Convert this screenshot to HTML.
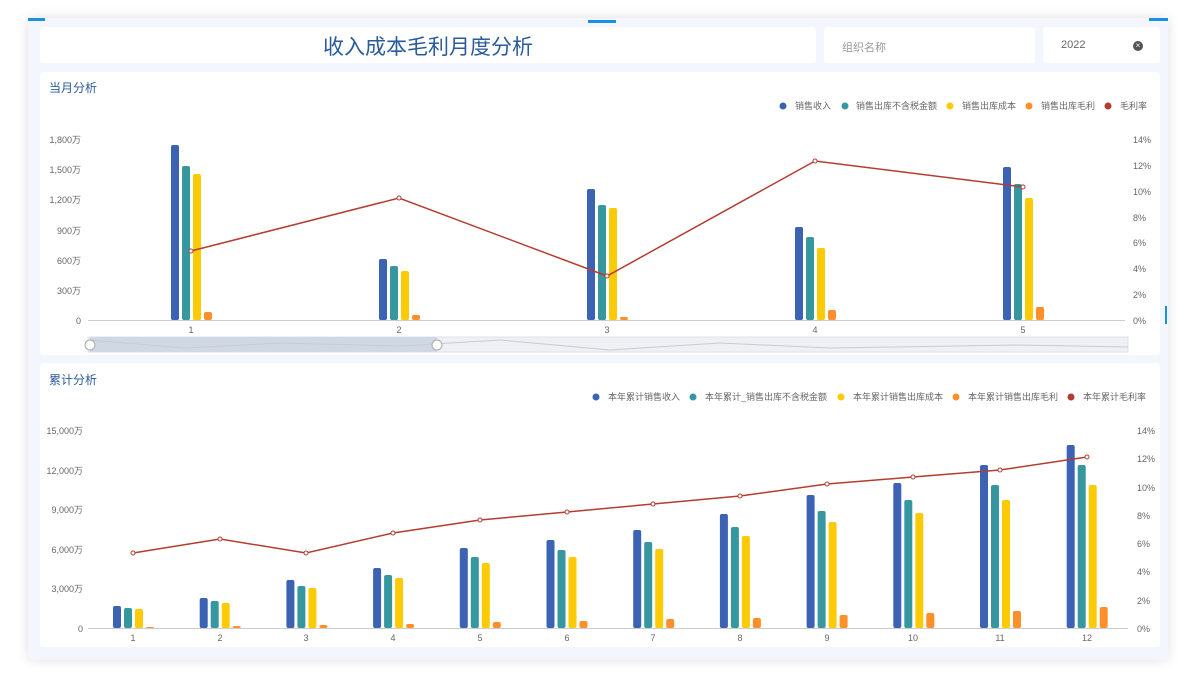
<!DOCTYPE html>
<html><head><meta charset="utf-8"><style>
*{margin:0;padding:0;box-sizing:border-box}
body{width:1200px;height:675px;background:#fff;font-family:"Liberation Sans","Noto Sans CJK SC",sans-serif;position:relative;overflow:hidden}
.outer{position:absolute;left:28px;top:18px;width:1140px;height:642px;background:#f3f7fd;box-shadow:0 0 12px rgba(0,0,0,.12)}
.box{position:absolute;background:#fff;border-radius:3px}
svg{position:absolute;left:0;top:0}
</style></head><body>
<div class="outer"></div>
<div style="position:absolute;left:28px;top:18px;width:17px;height:3px;background:#1a8fe3"></div>
<div style="position:absolute;left:588px;top:20px;width:28px;height:3px;background:#1a8fe3"></div>
<div style="position:absolute;left:1149px;top:18px;width:19px;height:3px;background:#1a8fe3"></div>
<div style="position:absolute;left:1165px;top:306px;width:2px;height:18px;background:#1a8fe3"></div>
<div class="box" style="left:40px;top:27px;width:776px;height:36px"></div>
<div style="position:absolute;left:40px;top:31px;width:776px;text-align:center;font-size:21px;color:#2a5b9a">收入成本毛利月度分析</div>
<div class="box" style="left:824px;top:27px;width:211px;height:36px"></div>
<div style="position:absolute;left:842px;top:39px;font-size:11px;color:#999">组织名称</div>
<div class="box" style="left:1043px;top:27px;width:117px;height:36px"></div>
<div style="position:absolute;left:1061px;top:39px;font-size:11px;color:#666">2022</div>
<div style="position:absolute;left:1133px;top:41px;width:10px;height:10px;border-radius:50%;background:#555;color:#fff;font-size:8px;line-height:10px;text-align:center">×</div>
<div class="box" style="left:40px;top:72px;width:1120px;height:283px"></div>
<div class="box" style="left:40px;top:363px;width:1120px;height:284px"></div>
<div style="position:absolute;left:49px;top:79px;font-size:12px;color:#2a5b9a">当月分析</div>
<div style="position:absolute;left:49px;top:371px;font-size:12px;color:#2a5b9a">累计分析</div>
<svg width="1200" height="675" font-size="9" fill="#666">
<g font-size="9" fill="#666">
<circle cx="783" cy="106" r="3.5" fill="#3b62b3"/><text x="795" y="109">销售收入</text>
<circle cx="845" cy="106" r="3.5" fill="#36979e"/><text x="856" y="109">销售出库不含税金额</text>
<circle cx="950" cy="106" r="3.5" fill="#fccb05"/><text x="962" y="109">销售出库成本</text>
<circle cx="1029" cy="106" r="3.5" fill="#ff8f2a"/><text x="1041" y="109">销售出库毛利</text>
<circle cx="1108" cy="106" r="3.5" fill="#b43c31"/><text x="1120" y="109">毛利率</text>
<circle cx="596" cy="397" r="3.5" fill="#3b62b3"/><text x="608" y="400">本年累计销售收入</text>
<circle cx="693" cy="397" r="3.5" fill="#36979e"/><text x="705" y="400">本年累计_销售出库不含税金额</text>
<circle cx="841" cy="397" r="3.5" fill="#fccb05"/><text x="853" y="400">本年累计销售出库成本</text>
<circle cx="956" cy="397" r="3.5" fill="#ff8f2a"/><text x="968" y="400">本年累计销售出库毛利</text>
<circle cx="1071" cy="397" r="3.5" fill="#b43c31"/><text x="1083" y="400">本年累计毛利率</text>
</g>
<g text-anchor="end">
<text x="81" y="143">1,800万</text><text x="81" y="173">1,500万</text><text x="81" y="203">1,200万</text><text x="81" y="234">900万</text><text x="81" y="264">600万</text><text x="81" y="294">300万</text><text x="81" y="324">0</text>
<text x="83" y="434">15,000万</text><text x="83" y="474">12,000万</text><text x="83" y="513">9,000万</text><text x="83" y="553">6,000万</text><text x="83" y="592">3,000万</text><text x="83" y="632">0</text>
</g>
<g>
<text x="1133" y="143">14%</text><text x="1133" y="169">12%</text><text x="1133" y="195">10%</text><text x="1133" y="221">8%</text><text x="1133" y="246">6%</text><text x="1133" y="272">4%</text><text x="1133" y="298">2%</text><text x="1133" y="324">0%</text>
<text x="1137" y="434">14%</text><text x="1137" y="462">12%</text><text x="1137" y="491">10%</text><text x="1137" y="519">8%</text><text x="1137" y="547">6%</text><text x="1137" y="575">4%</text><text x="1137" y="604">2%</text><text x="1137" y="632">0%</text>
</g>
<g text-anchor="middle">
<text x="191" y="333">1</text><text x="399" y="333">2</text><text x="607" y="333">3</text><text x="815" y="333">4</text><text x="1023" y="333">5</text>
<text x="133" y="641">1</text><text x="220" y="641">2</text><text x="306" y="641">3</text><text x="393" y="641">4</text><text x="480" y="641">5</text><text x="567" y="641">6</text><text x="653" y="641">7</text><text x="740" y="641">8</text><text x="827" y="641">9</text><text x="913" y="641">10</text><text x="1000" y="641">11</text><text x="1087" y="641">12</text>
</g>
<line x1="88" y1="320.5" x2="1125" y2="320.5" stroke="#ccc"/>
<line x1="88" y1="628.5" x2="1128" y2="628.5" stroke="#ccc"/>
<rect x="88" y="337" width="1040" height="15" fill="#eef0f3" stroke="#dde2ea"/>
<rect x="90" y="337" width="347" height="15" fill="#d0d8e4"/>
<path d="M90 340 L185 348 L280 343 L400 346 L500 340 L610 350 L720 343 L830 348 L1020 345 L1128 347" stroke="#c5ccd6" fill="none"/>
<circle cx="90" cy="345" r="5" fill="#fff" stroke="#aaa"/><circle cx="437" cy="345" r="5" fill="#fff" stroke="#aaa"/>
<g id="bars"></g>
<polyline points="191,251 399,198 607,276 815,161 1023,187" fill="none" stroke="#b43c31" stroke-width="1.5"/>
<polyline points="133,553 220,539 306,553 393,533 480,520 567,512 653,504 740,496 827,484 913,477 1000,470 1087,457" fill="none" stroke="#b43c31" stroke-width="1.5"/>
<g fill="#fff" stroke="#b43c31">
<circle cx="191" cy="251" r="2"/><circle cx="399" cy="198" r="2"/><circle cx="607" cy="276" r="2"/><circle cx="815" cy="161" r="2"/><circle cx="1023" cy="187" r="2"/>
<circle cx="133" cy="553" r="2"/><circle cx="220" cy="539" r="2"/><circle cx="306" cy="553" r="2"/><circle cx="393" cy="533" r="2"/><circle cx="480" cy="520" r="2"/><circle cx="567" cy="512" r="2"/><circle cx="653" cy="504" r="2"/><circle cx="740" cy="496" r="2"/><circle cx="827" cy="484" r="2"/><circle cx="913" cy="477" r="2"/><circle cx="1000" cy="470" r="2"/><circle cx="1087" cy="457" r="2"/>
</g>
</svg>
<script>
var c=["#3b62b3","#36979e","#fccb05","#ff8f2a"],g=document.getElementById("bars"),s="";
function b(cx,base,tops){for(var i=0;i<4;i++){var x=cx-20+i*11,t=tops[i];s+='<rect x="'+x+'" y="'+t+'" width="8" height="'+(base-t)+'" rx="2" fill="'+c[i]+'"/>';}}
var m=[[145,166,174,312],[259,266,271,315],[189,205,208,317],[227,237,248,310],[167,184,198,307]];
[191,399,607,815,1023].forEach(function(x,i){b(x,320,m[i]);});
var B=[606,598,580,568,548,540,530,514,495,483,465,445],T=[608,601,586,575,557,550,542,527,511,500,485,465],Y=[609,603,588,578,563,557,549,536,522,513,500,485],O=[627,626,625,624,622,621,619,618,615,613,611,607];
for(var i=0;i<12;i++)b(133+i*86.7,628,[B[i],T[i],Y[i],O[i]]);
g.innerHTML=s;
</script>
</body></html>
